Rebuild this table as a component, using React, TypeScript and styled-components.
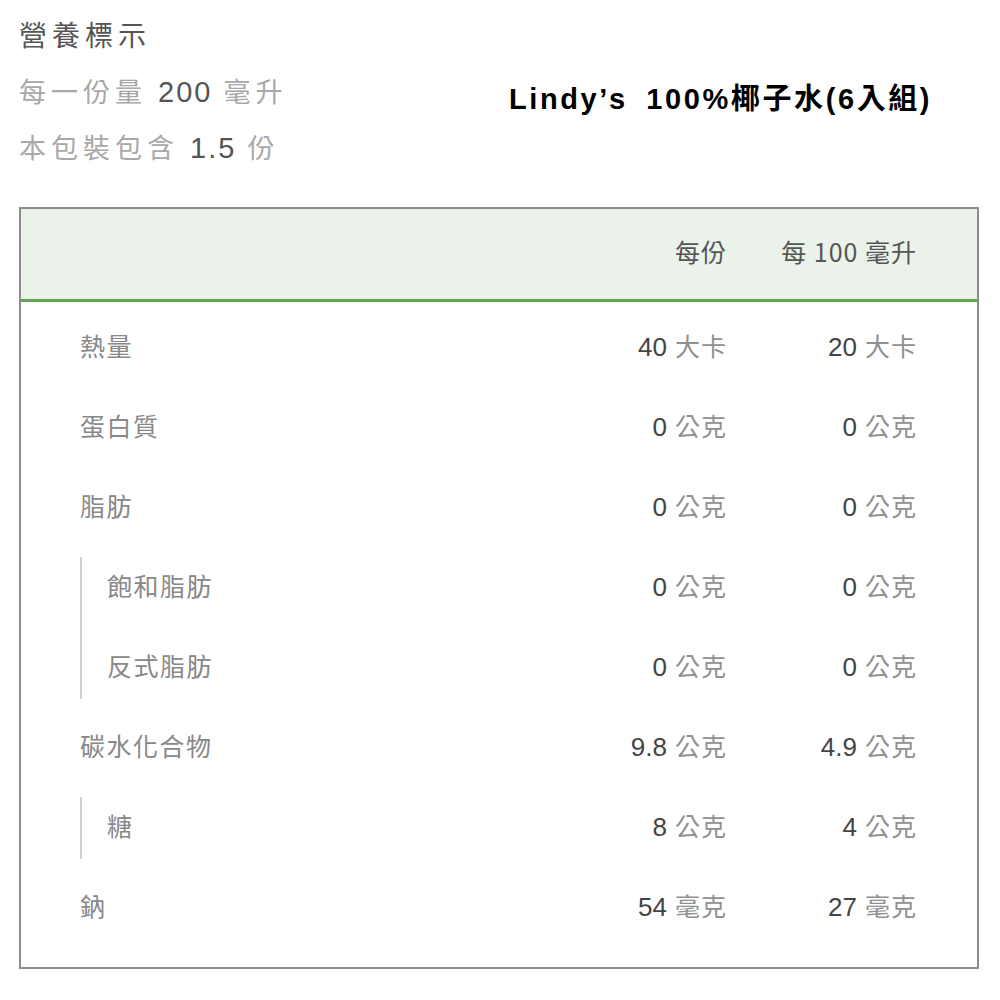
import React from "react";
import styled, { createGlobalStyle } from "styled-components";

const Global = createGlobalStyle`
  html, body { margin: 0; padding: 0; background: #fff; }
  body { font-family: "Liberation Sans", "Noto Sans CJK TC", sans-serif; }
`;

const Page = styled.div`
  width: 1000px;
  padding: 0 0 0 19px;
  box-sizing: border-box;
`;

const Intro = styled.div`
  display: grid;
  grid-template-columns: 490px 1fr;
  grid-template-rows: 56px 56px 56px;
  padding-top: 6px;
  align-items: center;
`;

const Title = styled.div`
  font-family: "Noto Sans CJK TC", sans-serif;
  font-size: 28px;
  letter-spacing: 5px;
  color: #555;
  grid-column: 1;
`;

const Info = styled.div`
  font-family: "Noto Sans CJK TC", sans-serif;
  font-size: 27px;
  letter-spacing: 5px;
  color: #a8a8a8;
  grid-column: 1;
`;

const Num = styled.span`
  font-family: "Liberation Sans", sans-serif;
  font-size: 29px;
  color: #555;
  letter-spacing: 2px;
`;

const Product = styled.div`
  grid-column: 2;
  grid-row: 2;
  font-family: "Liberation Sans", "Noto Sans CJK TC", sans-serif;
  font-weight: bold;
  font-size: 29px;
  color: #000;
  letter-spacing: 2.6px;
  word-spacing: 8px;
  padding-top: 12px;
  white-space: nowrap;
`;

const Table = styled.div`
  margin-top: 33px;
  width: 960px;
  box-sizing: border-box;
  border: 2px solid #8c8c8c;
  padding-bottom: 22px;
`;

const Grid = styled.div`
  display: grid;
  grid-template-columns: 1fr 180px 190px;
  align-items: center;
`;

const Head = styled(Grid)`
  height: 93px;
  box-sizing: border-box;
  padding: 0 61px 6px 59px;
  background: #eaf2ea;
  border-bottom: 3px solid #62a553;
  font-family: "Noto Sans CJK TC", sans-serif;
  font-size: 25px;
  color: #555;
`;

const HeadCell = styled.div`
  text-align: right;
  letter-spacing: 1px;
  margin-right: -1px;
`;

const Body = styled.div`
  padding-top: 3px;
`;

const Row = styled(Grid)`
  height: 80px;
  padding: 0 61px 0 59px;
`;

const Label = styled.div<{ $sub?: boolean }>`
  font-family: "Noto Sans CJK TC", sans-serif;
  font-size: 25px;
  color: #888;
  letter-spacing: 1.5px;
  padding-left: ${(p) => (p.$sub ? "27px" : "0")};
`;

const Val = styled.div`
  text-align: right;
  font-size: 25px;
`;

const ValNum = styled.span`
  font-family: "Liberation Sans", sans-serif;
  font-size: 26px;
  color: #444;
`;

const Unit = styled.span`
  font-family: "Noto Sans CJK TC", sans-serif;
  color: #909090;
  margin-left: 8px;
  letter-spacing: 1px;
  margin-right: -1px;
`;

const Group = styled.div`
  position: relative;
  &::before {
    content: "";
    position: absolute;
    left: 59px;
    top: 12px;
    bottom: 6px;
    width: 2px;
    background: #cfcfcf;
  }
`;

type R = { label: string; a: [string, string]; b: [string, string] };

const Line = ({ r, sub }: { r: R; sub?: boolean }) => (
  <Row>
    <Label $sub={sub}>{r.label}</Label>
    <Val>
      <ValNum>{r.a[0]}</ValNum>
      <Unit>{r.a[1]}</Unit>
    </Val>
    <Val>
      <ValNum>{r.b[0]}</ValNum>
      <Unit>{r.b[1]}</Unit>
    </Val>
  </Row>
);

export default function App() {
  return (
    <Page>
      <Global />
      <Intro>
        <Title>營養標示</Title>
        <Info>
          每一份量 <Num>200</Num> 毫升
        </Info>
        <Product>Lindy’s 100%椰子水(6入組)</Product>
        <Info>
          本包裝包含 <Num>1.5</Num> 份
        </Info>
      </Intro>
      <Table>
        <Head>
          <div />
          <HeadCell>每份</HeadCell>
          <HeadCell>每 100 毫升</HeadCell>
        </Head>
        <Body>
          <Line r={{ label: "熱量", a: ["40", "大卡"], b: ["20", "大卡"] }} />
          <Line r={{ label: "蛋白質", a: ["0", "公克"], b: ["0", "公克"] }} />
          <Line r={{ label: "脂肪", a: ["0", "公克"], b: ["0", "公克"] }} />
          <Group>
            <Line sub r={{ label: "飽和脂肪", a: ["0", "公克"], b: ["0", "公克"] }} />
            <Line sub r={{ label: "反式脂肪", a: ["0", "公克"], b: ["0", "公克"] }} />
          </Group>
          <Line r={{ label: "碳水化合物", a: ["9.8", "公克"], b: ["4.9", "公克"] }} />
          <Group>
            <Line sub r={{ label: "糖", a: ["8", "公克"], b: ["4", "公克"] }} />
          </Group>
          <Line r={{ label: "鈉", a: ["54", "毫克"], b: ["27", "毫克"] }} />
        </Body>
      </Table>
    </Page>
  );
}
